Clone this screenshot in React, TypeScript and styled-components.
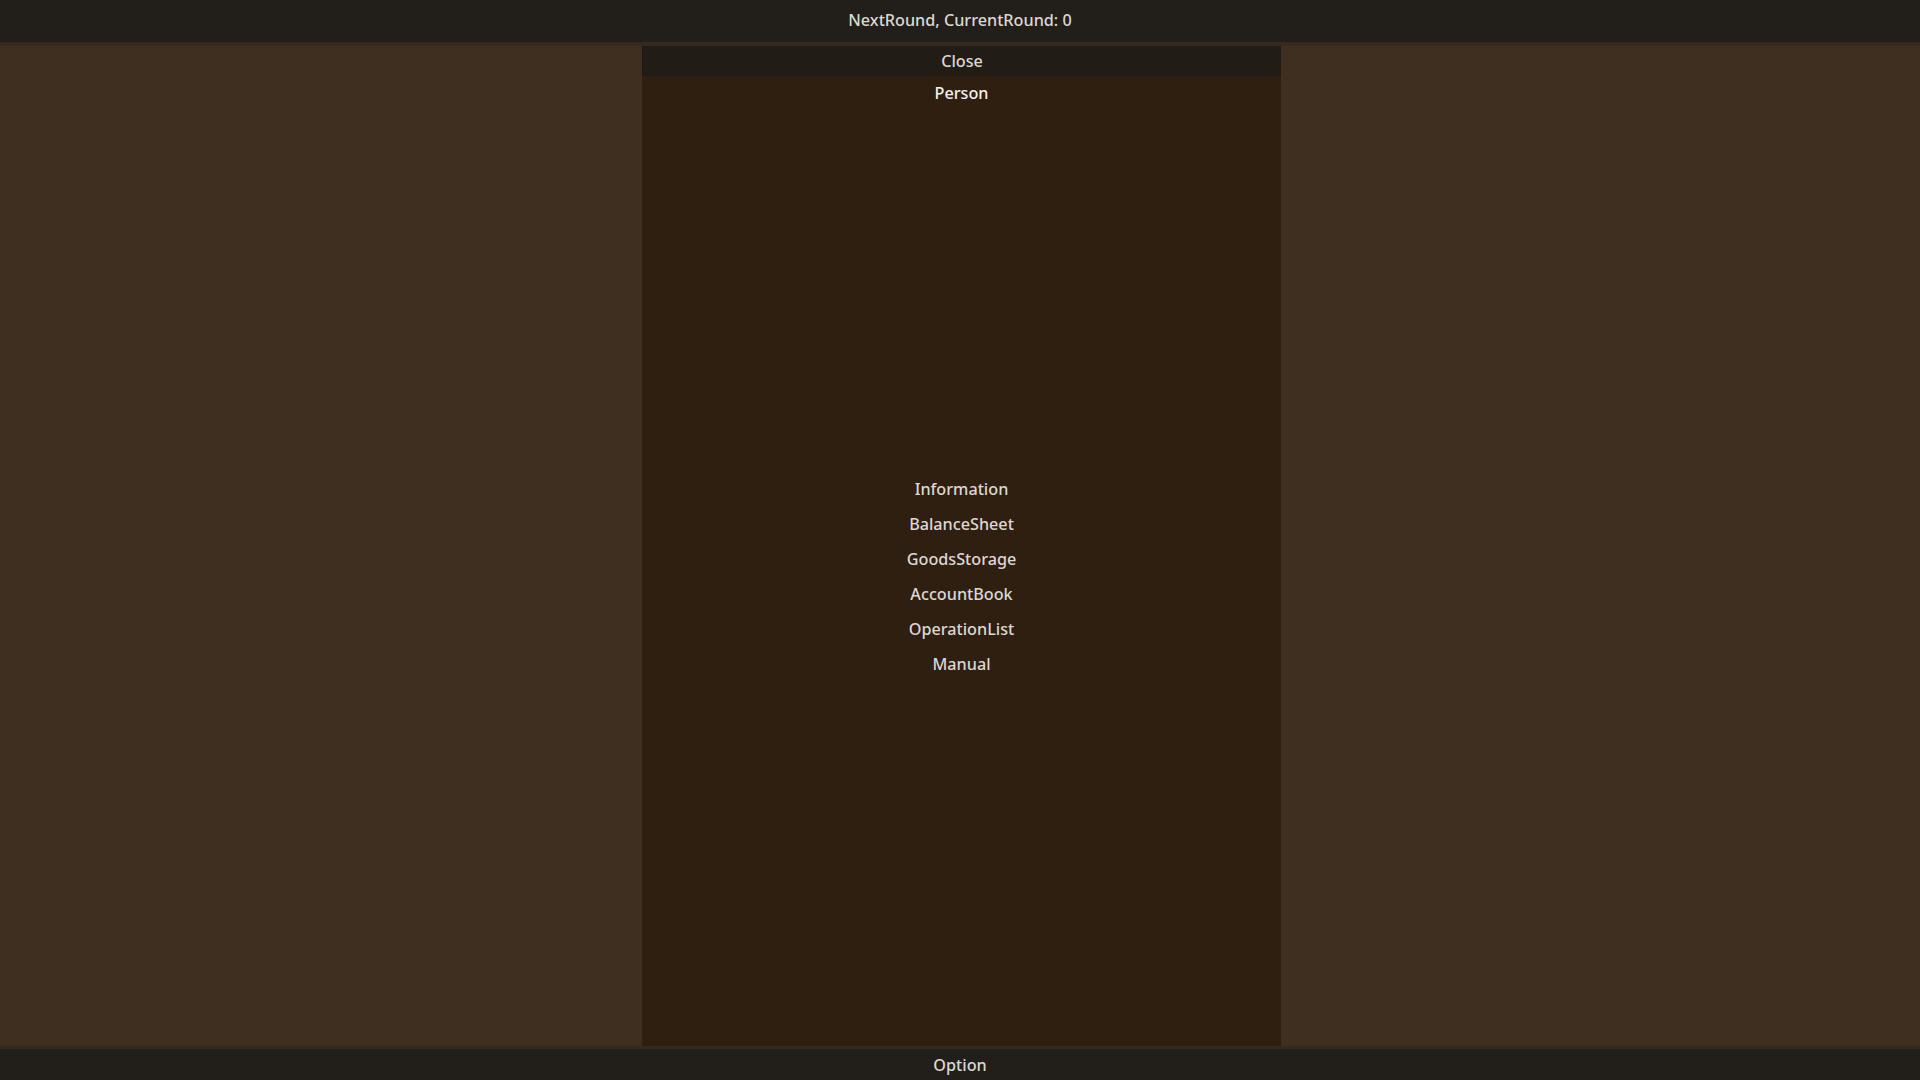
import styled, { createGlobalStyle } from "styled-components";

const GlobalStyle = createGlobalStyle`
  html, body {
    margin: 0;
    padding: 0;
    height: 100%;
    background: #3e2f21;
  }
  #root {
    height: 100%;
  }
`;

const menuItems = [
  "Information",
  "BalanceSheet",
  "GoodsStorage",
  "AccountBook",
  "OperationList",
  "Manual",
];

const App = () => {
  return (
    <>
      <GlobalStyle />
      <Screen>
        <TopBar>NextRound, CurrentRound: 0</TopBar>
        <Middle>
          <Panel>
            <CloseRow>Close</CloseRow>
            <PersonRow>Person</PersonRow>
            <MenuList>
              {menuItems.map((item) => (
                <MenuItem key={item}>{item}</MenuItem>
              ))}
            </MenuList>
          </Panel>
        </Middle>
        <BottomBar>Option</BottomBar>
      </Screen>
    </>
  );
};

export default App;

const Screen = styled.div`
  display: flex;
  flex-direction: column;
  height: 100vh;
  font-family: "Noto Sans", "Open Sans", sans-serif;
  font-size: 16.2px;
  font-weight: 500;
  color: #ddd8d1;
`;

const TopBar = styled.div`
  display: flex;
  align-items: center;
  justify-content: center;
  height: 46px;
  padding-bottom: 2px;
  box-sizing: border-box;
  background: #221f1b;
  border-bottom: 4px solid #342a1f;
  flex-shrink: 0;
`;

const Middle = styled.div`
  flex: 1;
  display: flex;
  justify-content: center;
  padding-left: 3px;
  min-height: 0;
  background: #3e2f21;
`;

const Panel = styled.div`
  width: 639px;
  display: flex;
  flex-direction: column;
  background: #2e1f11;
`;

const CloseRow = styled.div`
  display: flex;
  align-items: center;
  justify-content: center;
  height: 30px;
  background: #221c16;
  border-left: 1px solid #1c1812;
`;

const PersonRow = styled.div`
  display: flex;
  align-items: center;
  justify-content: center;
  height: 33px;
  color: #f4f1ec;
  font-weight: 500;
`;

const MenuList = styled.div`
  flex: 1;
  display: flex;
  flex-direction: column;
  align-items: center;
  justify-content: center;
  padding-bottom: 2px;
`;

const MenuItem = styled.div`
  display: flex;
  align-items: center;
  justify-content: center;
  height: 35px;
`;

const BottomBar = styled.div`
  display: flex;
  align-items: center;
  justify-content: center;
  height: 31px;
  background: #221f1b;
  border-top: 3px solid #342a1f;
  flex-shrink: 0;
`;
